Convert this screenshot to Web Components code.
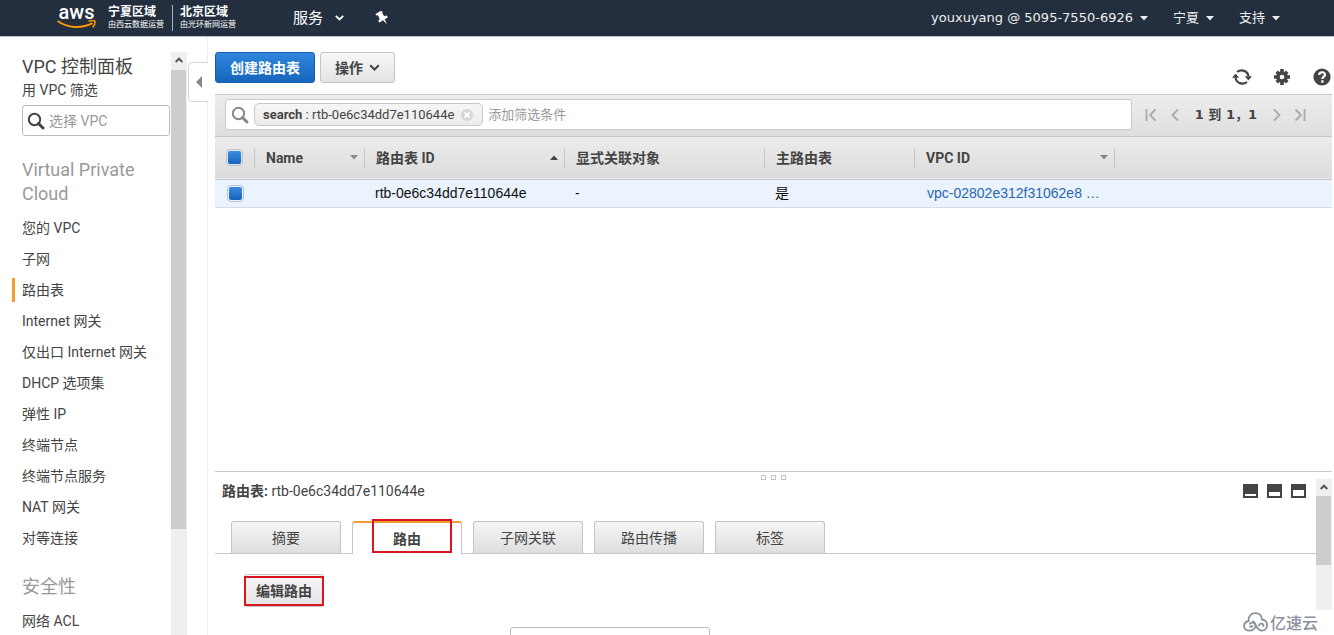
<!DOCTYPE html>
<html lang="zh-CN">
<head>
<meta charset="utf-8">
<title>VPC 控制面板</title>
<style>
html, body { margin: 0; height: 100%; overflow: hidden; }
body { font: 14px/20px Roboto, "Noto Sans CJK SC", sans-serif; color: #444; background: #fff; }
</style>
</head>
<body>
<console-app></console-app>

<template id="t-app">
<style>
:host { display: flex; flex-direction: column; height: 100vh; overflow: hidden; }
.body { display: flex; flex: 1; min-height: 0; }
main { flex: 1; min-width: 0; display: flex; flex-direction: column; padding: 15px 2px 0 7px; }
route-table { flex: 1; min-height: 0; overflow: hidden; }
</style>
<console-header></console-header>
<div class="body">
  <side-nav>
    <nav-group heading="Virtual Private Cloud">
      <nav-item>您的 VPC</nav-item>
      <nav-item>子网</nav-item>
      <nav-item current>路由表</nav-item>
      <nav-item>Internet 网关</nav-item>
      <nav-item>仅出口 Internet 网关</nav-item>
      <nav-item>DHCP 选项集</nav-item>
      <nav-item>弹性 IP</nav-item>
      <nav-item>终端节点</nav-item>
      <nav-item>终端节点服务</nav-item>
      <nav-item>NAT 网关</nav-item>
      <nav-item>对等连接</nav-item>
    </nav-group>
    <nav-group heading="安全性">
      <nav-item>网络 ACL</nav-item>
    </nav-group>
  </side-nav>
  <nav-collapse></nav-collapse>
  <main>
    <tool-bar></tool-bar>
    <filter-bar></filter-bar>
    <route-table></route-table>
    <detail-panel></detail-panel>
  </main>
</div>
<water-mark>亿速云</water-mark>
</template>

<template id="t-header">
<style>
:host { display: block; background: #232f3e; border-bottom: 1px solid #b9c3cf; color: #fff; }
header { display: flex; align-items: center; height: 36px; padding: 0 54px 0 57px; box-sizing: border-box; }
a { color: inherit; text-decoration: none; }
.brand { display: flex; align-items: center; height: 36px; }
.logo { display: flex; flex-direction: column; width: 39px; margin-bottom: 7px; align-items: center; font: 500 20px/24px Roboto, sans-serif; }
.logo svg { display: block; margin-top: -4px; }
.region { display: flex; flex-direction: column; font-size: 8px; line-height: 12px; white-space: nowrap; }
.region b { font-size: 12px; line-height: 14px; }
.region.first { margin-left: 12px; padding-right: 8px; border-right: 1px solid #aab3bd; }
.region.second { padding-left: 7px; }
button { display: flex; align-items: center; gap: 7px; border: 0; padding: 0; background: none; color: #eee; font: 13px/20px "DejaVu Sans", "Noto Sans CJK SC", sans-serif; }
.services { margin-left: 57px; gap: 12px; font-size: 15px; color: #fff; }
.pin { margin-left: 31px; }
.right { margin-left: auto; display: flex; gap: 25px; }
</style>
<header>
  <a class="brand" href="#" aria-label="aws">
    <span class="logo">aws
      <svg width="39" height="9" viewBox="0 0 39 9"><path d="M.6 1C11 8.300 24 9 35.500 3.200" fill="none" stroke="#f90" stroke-width="2"/><path d="M31.500 1.200c3.500-1 6.500-.8 6.600.3 0 1.500-.6 4-2.300 6" fill="none" stroke="#f90" stroke-width="1.500"/></svg>
    </span>
    <span class="region first"><b>宁夏区域</b>由西云数据运营</span>
    <span class="region second"><b>北京区域</b>由光环新网运营</span>
  </a>
  <button class="services">服务 <svg width="9" height="6" viewBox="0 0 9 6"><path d="M.8.8 4.500 4.500 8.200.8" fill="none" stroke="#fff" stroke-width="1.800"/></svg></button>
  <button class="pin" aria-label="固定"><svg width="13" height="14" viewBox="0 0 13 14"><path d="M4.500.5 7 0l.6 1L7.200 2l2 3.200 1.800-.6 1.200.4.500 1.500-3 1.800 2.300 5-4-4-3.600 2.300-1-1.200.3-1.400 1-.8L3 4.200l-1.500.2L.3 3.300z" fill="#fff"/></svg></button>
  <div class="right">
    <button>youxuyang @ 5095-7550-6926 <caret-icon></caret-icon></button>
    <button>宁夏 <caret-icon></caret-icon></button>
    <button>支持 <caret-icon></caret-icon></button>
  </div>
</header>
</template>

<template id="t-caret">
<style>:host { display: inline-block; flex: none; } svg { display: block; }</style>
<svg width="8" height="5" viewBox="0 0 8 5"><path d="M0 0h8L4 4.500z" fill="currentColor"/></svg>
</template>

<template id="t-side">
<style>
:host { display: flex; width: 187px; flex: none; box-sizing: border-box; padding-top: 15px; overflow: hidden; }
nav { flex: 1; padding-left: 12px; min-width: 0; margin-right: -10px; }
.top { padding-left: 10px; }
h1 { margin: 0; padding-top: 3px; font-weight: 400; font-size: 18px; line-height: 24px; }
label { display: block; line-height: 23px; }
.box { display: flex; align-items: center; gap: 4px; width: 148px; height: 31px; margin: 3px 0 22px; padding: 0 4px; border: 1px solid #bbb; border-radius: 3px; box-sizing: border-box; }
input { flex: 1; min-width: 0; border: 0; padding: 0; outline: 0; background: none; font: inherit; }
input::placeholder { color: #999; opacity: 1; }
scroll-rail { --start: 1px; --thumb: 459px; }
</style>
<nav>
  <div class="top">
    <h1>VPC 控制面板</h1>
    <label for="vpc">用 VPC 筛选</label>
    <div class="box"><search-icon style="color:#444"></search-icon><input id="vpc" placeholder="选择 VPC"></div>
  </div>
  <slot></slot>
</nav>
<scroll-rail></scroll-rail>
</template>

<template id="t-search">
<style>:host { display: block; flex: none; } svg { display: block; }</style>
<svg width="18" height="18" viewBox="0 0 18 18"><circle cx="7.500" cy="7.500" r="5.700" fill="none" stroke="currentColor" stroke-width="2"/><path d="m11.500 11.500 4.500 4.500" stroke="currentColor" stroke-width="3" stroke-linecap="round"/></svg>
</template>

<template id="t-group">
<style>
:host { display: block; margin-bottom: 21px; }
h2 { margin: 0 0 7px; padding-left: 10px; width: 120px; font-weight: 400; font-size: 18px; line-height: 24px; color: #999; }
</style>
<h2></h2><slot></slot>
</template>

<template id="t-item">
<style>
:host { display: block; padding: 3px 0 4px; }
a { display: block; color: #444; text-decoration: none; padding-left: 7px; border-left: 3px solid transparent; line-height: 24px; white-space: nowrap; }
:host([current]) a { border-color: #f29b2e; }
</style>
<a href="#"><slot></slot></a>
</template>

<template id="t-rail">
<style>
:host { display: flex; flex-direction: column; flex: none; width: 16px; background: #efefef; position: relative; }
svg { display: block; margin: 5px 4px 6px; }
i { display: block; width: 15px; height: var(--thumb); margin-top: var(--start); background: #cdcdcd; }
</style>
<svg width="8" height="6" viewBox="0 0 8 6"><path d="M.7 5 4 1.700 7.300 5" fill="none" stroke="#555" stroke-width="2"/></svg><i></i>
</template>

<template id="t-collapse">
<style>
:host { display: flex; flex-direction: column; width: 21px; flex: none; }
.line { width: 20px; border-right: 1px solid #eee; height: 25px; }
.rest { flex: 1; height: auto; }
button { width: 20px; height: 40px; margin-left: 1px; padding: 0; display: flex; align-items: center; justify-content: center; background: #fff; border: 1px solid #d4d4d4; border-right: 0; border-radius: 5px 0 0 5px; }
</style>
<span class="line"></span>
<button aria-label="折叠"><svg width="6" height="12" viewBox="0 0 6 12"><path d="M6 0v12L0 6z" fill="#888"/></svg></button>
<span class="line rest"></span>
</template>

<template id="t-button">
<style>
:host { display: block; }
button { display: flex; align-items: center; gap: 6px; height: 31px; padding: 0 14px; border: 1px solid #c4c4c4; border-radius: 3px; background: linear-gradient(#f8f8f8, #e3e3e3); color: #444; font: 700 14px/20px Roboto, "Noto Sans CJK SC", sans-serif; }
:host([primary]) button { background: linear-gradient(#2f86dc, #1765bd); border-color: #1560b2; color: #fff; }
:host([flat]) button { padding: 0 11px; height: 33px; }
</style>
<button><slot></slot></button>
</template>

<template id="t-tools">
<style>
:host { display: flex; align-items: flex-start; gap: 5px; height: 42px; }
.icons { display: flex; gap: 20px; margin: 15px 0 0 auto; }
.icons button { display: flex; align-items: center; justify-content: center; width: 20px; height: 20px; padding: 0; border: 0; background: none; }
svg { display: block; }
</style>
<action-button primary>创建路由表</action-button>
<action-button>操作 <svg width="11" height="8" viewBox="0 0 11 8"><path d="M1.200 1.200 5.500 5.500 9.800 1.200" fill="none" stroke="#444" stroke-width="2"/></svg></action-button>
<div class="icons">
  <button aria-label="刷新"><svg width="20" height="16" viewBox="0 0 20 16"><path d="M5 3A7 6.800 0 0 1 16.500 7.500M15 13A7 6.800 0 0 1 3.500 8.500" fill="none" stroke="#444" stroke-width="2.200"/><path d="M12.800 7.200H20l-3.600 4.300zM0 8.800h7.200L3.600 4.500z" fill="#444"/></svg></button>
  <button aria-label="设置"><svg width="16" height="16" viewBox="0 0 16 16"><g fill="#444"><path d="M6.200 0h3.600v16H6.200zM0 6.200h16v3.600H0z"/><path d="M6.200.5h3.600v15H6.200zM.5 6.200h15v3.600H.5z" transform="rotate(45 8 8)"/><circle cx="8" cy="8" r="5.800"/></g><circle cx="8" cy="8" r="2.300" fill="#fff"/></svg></button>
  <button aria-label="帮助"><svg width="18" height="18" viewBox="0 0 18 18"><circle cx="9" cy="9" r="8.600" fill="#444"/><path d="M6.200 7C6.200 3.400 12 3.400 12 6.700c0 2-2.600 2-2.600 4.300" fill="none" stroke="#fff" stroke-width="2.200"/><path d="M8.200 12.300h2.400v2.400H8.200z" fill="#fff"/></svg></button>
</div>
</template>

<template id="t-filter">
<style>
:host { display: flex; align-items: center; height: 43px; box-sizing: border-box; padding: 0 26px 2px 10px; border: solid #c8c8c8; border-width: 1px 0; background: linear-gradient(#ededed, #dedede); }
.field { flex: 1; display: flex; align-items: center; gap: 5px; height: 31px; padding: 0 6px 0 5px; box-sizing: border-box; border: 1px solid #ccc; border-radius: 3px; background: #fff; }
.tag { display: flex; align-items: center; height: 23px; padding: 0 9px 0 8px; box-sizing: border-box; border: 1px solid #c9c9c9; border-radius: 5px; background: linear-gradient(#f6f6f6, #ebebeb); font-size: 13px; white-space: pre; }
.tag button { display: flex; margin-left: 7px; padding: 0; border: 0; background: none; }
input { flex: 1; min-width: 0; padding: 0; border: 0; outline: 0; background: none; font: inherit; font-size: 13px; }
input::placeholder { color: #999; opacity: 1; }
.pager { display: flex; align-items: center; margin-left: 13px; }
.pager button { display: flex; border: 0; padding: 0; background: none; }
.pager b { margin: 0 16px; font: 700 13px/20px "DejaVu Sans", "Noto Sans CJK SC", sans-serif; white-space: nowrap; }
path { fill: none; stroke: #aaa; stroke-width: 1.800; }
.prev { margin-left: 14px; } .last { margin-left: 13px; }
</style>
<div class="field">
  <search-icon style="color:#888"></search-icon>
  <span class="tag"><b>search</b> : rtb-0e6c34dd7e110644e<button aria-label="移除"><svg width="12" height="12" viewBox="0 0 12 12"><circle cx="6" cy="6" r="6" style="fill:#d6d6d6"/><path d="m3.500 3.500 5 5m0-5-5 5" style="stroke:#fff"/></svg></button></span>
  <input placeholder="添加筛选条件" aria-label="添加筛选条件">
</div>
<div class="pager">
  <button aria-label="首页"><svg width="12" height="14" viewBox="0 0 12 14"><path d="M1.500 1v12M10.500 1.500 5 7l5.500 5.500"/></svg></button>
  <button class="prev" aria-label="上一页"><svg width="8" height="14" viewBox="0 0 8 14"><path d="M7 1.500 1.500 7 7 12.500"/></svg></button>
  <b>1 到 1，1</b>
  <button aria-label="下一页"><svg width="8" height="14" viewBox="0 0 8 14"><path d="M1 1.500 6.500 7 1 12.500"/></svg></button>
  <button class="last" aria-label="末页"><svg width="12" height="14" viewBox="0 0 12 14"><path d="M10.500 1v12M1.500 1.500 7 7l-5.500 5.500"/></svg></button>
</div>
</template>

<template id="t-table">
<style>
:host { display: block; }
table { width: 100%; table-layout: fixed; border-collapse: collapse; font: 14px/20px "Liberation Sans", "Noto Sans CJK SC", sans-serif; color: #111; }
thead tr { height: 42px; background: linear-gradient(#ececec, #dcdcdc); border-bottom: 1px solid #c8c8c8; }
th, td { padding: 0 0 0 10px; text-align: left; white-space: nowrap; overflow: hidden; }
th { padding-left: 0; font: 700 14px/20px Roboto, "Noto Sans CJK SC", sans-serif; color: #444; }
th > div { display: flex; align-items: center; justify-content: space-between; height: 20px; padding: 0 6px 0 11px; border-right: 1px solid #c6c6c6; box-shadow: 1px 0 #f7f7f7; }
th:last-child > div { border: 0; box-shadow: none; }
tbody tr { height: 28px; background: #eaf3fe; border-bottom: 1px solid #d3dde8; }
td.check { padding-left: 12px; }
td.link { padding-left: 12px; }
caret-icon { color: #888; }
caret-icon.up { color: #444; transform: rotate(180deg); }
td a { color: #2a67ad; text-decoration: none; }
input { appearance: none; display: block; width: 17px; height: 17px; margin: 0; border: 1px solid #b4c4d4; border-radius: 4px; background: linear-gradient(#3a8ce0, #1765bd) content-box #fff; padding: 1px; }
</style>
<table>
<colgroup><col style="width:40px"><col style="width:110px"><col style="width:200px"><col style="width:200px"><col style="width:150px"><col style="width:200px"><col></colgroup>
<thead><tr>
<th><div><input type="checkbox" checked aria-label="全选"></div></th>
<th><div>Name <caret-icon></caret-icon></div></th>
<th><div>路由表 ID <caret-icon class="up"></caret-icon></div></th>
<th><div>显式关联对象</div></th>
<th><div>主路由表</div></th>
<th><div>VPC ID <caret-icon></caret-icon></div></th>
<th><div></div></th>
</tr></thead>
<tbody><tr>
<td class="check"><input type="checkbox" checked aria-label="选择路由表"></td><td></td><td>rtb-0e6c34dd7e110644e</td><td>-</td><td>是</td><td class="link"><a href="#">vpc-02802e312f31062e8 …</a></td><td></td>
</tr></tbody>
</table>
</template>

<template id="t-detail">
<style>
:host { display: flex; flex: none; height: 164px; box-sizing: border-box; border-top: 1px solid #c8c8c8; overflow: hidden; }
section { flex: 1; min-width: 0; display: flex; flex-direction: column; }
section > * { flex: none; }
.grip { display: flex; justify-content: center; gap: 5px; height: 9px; padding: 3px 0 0 16px; box-sizing: border-box; }
.grip i { width: 5px; height: 5px; box-sizing: border-box; border: 1px solid #c4c4c4; }
.head { display: flex; align-items: center; justify-content: space-between; height: 20px; padding: 0 10px 0 7px; }
.sizes { display: flex; gap: 9px; }
.sizes button { display: flex; width: 15px; height: 14px; padding: 0; border: 0; background: none; }
.tabs { display: flex; gap: 11px; margin-top: 20px; padding-left: 16px; border-bottom: 1px solid #c8c8c8; height: 32px; }
.actions { display: flex; padding: 20px 29px 0; }
.mark { position: relative; }
.mark::after { content: ""; position: absolute; inset: 2px 0 1px; border: 2px solid #d9161d; pointer-events: none; }
.entry { width: 200px; height: 28px; box-sizing: border-box; margin: 20px 0 0 295px; border: 1px solid #bbb; border-radius: 3px; }
scroll-rail { height: 131px; margin-top: 7px; --start: 0px; --thumb: 69px; }
</style>
<section>
  <div class="grip"><i></i><i></i><i></i></div>
  <div class="head"><span><b>路由表:</b> rtb-0e6c34dd7e110644e</span>
    <span class="sizes">
      <button aria-label="小"><svg width="15" height="14"><path d="M0 0h15v14H0z" fill="#444"/><path d="M2 10h11v2H2z" fill="#fff"/></svg></button>
      <button aria-label="中"><svg width="15" height="14"><path d="M0 0h15v14H0z" fill="#444"/><path d="M2 8h11v4H2z" fill="#fff"/></svg></button>
      <button aria-label="大"><svg width="15" height="14"><path d="M0 0h15v14H0z" fill="#444"/><path d="M2 6h11v6H2z" fill="#fff"/></svg></button>
    </span></div>
  <div class="tabs">
    <detail-tab>摘要</detail-tab><detail-tab active>路由</detail-tab><detail-tab>子网关联</detail-tab><detail-tab>路由传播</detail-tab><detail-tab>标签</detail-tab>
  </div>
  <div class="actions"><action-button class="mark" flat>编辑路由</action-button></div>
  <input class="entry" aria-label="搜索路由">
</section>
<scroll-rail></scroll-rail>
</template>

<template id="t-tab">
<style>
:host { display: block; width: 110px; position: relative; }
button { display: block; width: 100%; height: 32px; padding: 0; border: 1px solid #c4c4c4; border-bottom: 0; border-radius: 3px 3px 0 0; background: linear-gradient(#f6f6f6, #dedede); color: #444; font: 14px/20px Roboto, "Noto Sans CJK SC", sans-serif; }
:host([active]) button { height: 33px; border-top: 2px solid #f29b2e; background: #fff; font-weight: 700; }
:host([active])::after { content: ""; position: absolute; inset: -2px 10px 0 20px; border: 2px solid #d9161d; pointer-events: none; }
</style>
<button><slot></slot></button>
</template>

<template id="t-mark">
<style>
:host { position: absolute; right: 16px; bottom: 3px; display: flex; align-items: center; gap: 2px; color: #8b919c; font: 500 16px/20px "Noto Sans CJK SC", sans-serif; }
</style>
<svg width="25" height="20" viewBox="0 0 25 20" fill="none" stroke="currentColor" stroke-width="1.800" stroke-linecap="round"><path d="M5.500 8C5.500 4 8.500 1.200 12.300 1.200c3.700 0 6.300 2.500 6.700 6.300 7 .5 6.500 11 0 11.200-6.500 0-6-9-9-9.500M6 9c-6.500.5-6.500 9.700 0 9.700 4 0 6.500-2.200 6.500-5 0-3-3.500-4-5.500-2M7 14.500h2.500M16 13.500c.5-2.500 4.500-2.500 4.500.5"/></svg>
<slot></slot>
</template>

<script>
const define = (name, id, setup) => customElements.define(name, class extends HTMLElement {
  constructor() {
    super();
    this.attachShadow({ mode: "open" }).append(document.getElementById(id).content.cloneNode(true));
  }
  connectedCallback() { if (setup) setup(this); }
});
define("caret-icon", "t-caret");
define("search-icon", "t-search");
define("scroll-rail", "t-rail");
define("action-button", "t-button");
define("nav-item", "t-item");
define("nav-group", "t-group", el => { el.shadowRoot.querySelector("h2").textContent = el.getAttribute("heading"); });
define("nav-collapse", "t-collapse");
define("side-nav", "t-side");
define("console-header", "t-header");
define("tool-bar", "t-tools");
define("filter-bar", "t-filter");
define("route-table", "t-table");
define("detail-tab", "t-tab");
define("detail-panel", "t-detail");
define("water-mark", "t-mark");
define("console-app", "t-app");
</script>
</body>
</html>
